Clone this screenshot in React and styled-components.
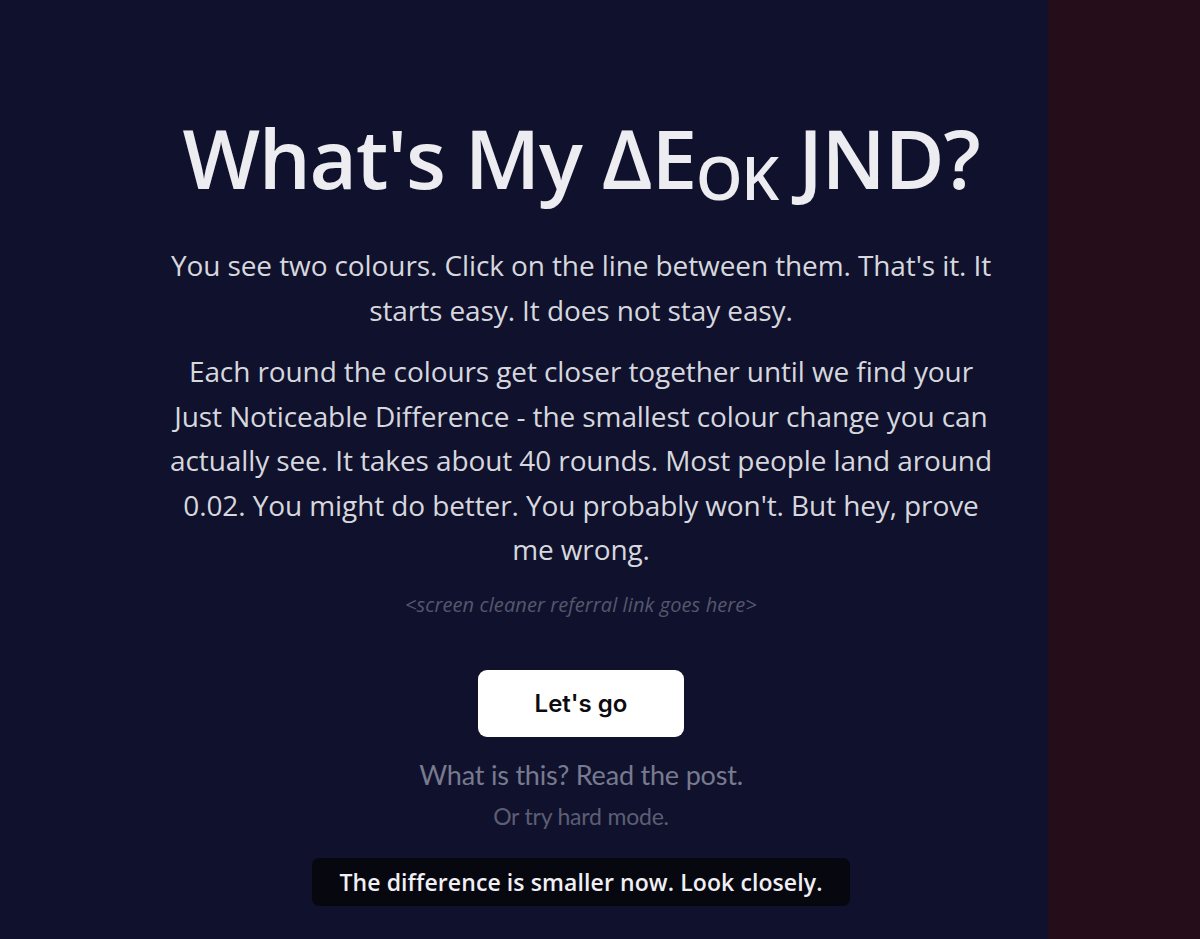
import React from 'react';
import styled, { createGlobalStyle } from 'styled-components';

const GlobalStyle = createGlobalStyle`
  html, body {
    margin: 0;
    padding: 0;
    background: #250e1a;
  }
  body {
    font-family: "Open Sans", "Noto Sans", sans-serif;
    -webkit-font-smoothing: antialiased;
  }
`;

const Stage = styled.div`
  display: grid;
  grid-template-columns: 1048px 1fr;
  height: 939px;
  overflow: hidden;
`;

const Pane = styled.div`
  background: ${(p) => p.$tone};
`;

const LeftPane = styled(Pane)`
  display: flex;
  flex-direction: column;
  align-items: center;
  padding: 116px 0 0 114px;
  box-sizing: border-box;
`;

const Title = styled.h1`
  margin: 0;
  font-size: 82px;
  font-weight: 560;
  line-height: 1;
  color: #ececf1;
  letter-spacing: -1.2px;
  font-stretch: 92%;
  white-space: nowrap;
`;

const Sub = styled.sub`
  font-size: 0.72em;
  vertical-align: -0.19em;
  line-height: 0;
  letter-spacing: -1px;
`;

const Copy = styled.p`
  margin: ${(p) => (p.$first ? '45px' : '17px')} 0 0;
  max-width: 836px;
  text-align: center;
  font-size: 28px;
  line-height: 44.5px;
  color: #d7d7de;
  letter-spacing: -0.1px;
`;

const Referral = styled.div`
  margin-top: 20px;
  font-style: italic;
  font-size: 20px;
  line-height: 26px;
  color: #55576e;
  letter-spacing: 0.1px;
`;

const GoButton = styled.button`
  margin-top: 52px;
  width: 206px;
  height: 67px;
  border: 0;
  border-radius: 9px;
  background: #ffffff;
  color: #0c0c10;
  font-family: Inter, "Liberation Sans", sans-serif;
  font-size: 24px;
  font-weight: 600;
  cursor: pointer;
`;

const TextLink = styled.a`
  margin-top: ${(p) => p.$gap};
  font-family: Lato, "Open Sans", sans-serif;
  font-size: ${(p) => p.$size};
  line-height: 1.2;
  color: ${(p) => p.$color};
  text-decoration: none;
  letter-spacing: -0.2px;
`;

const Toast = styled.div`
  margin-top: 28px;
  width: 538px;
  height: 48px;
  box-sizing: border-box;
  display: flex;
  align-items: center;
  justify-content: center;
  background: #07070f;
  border-radius: 7px;
  color: #f0f0f4;
  font-size: 23px;
  font-weight: 600;
  font-stretch: 92%;
  letter-spacing: 0.1px;
`;

export default function App() {
  return (
    <>
      <GlobalStyle />
      <Stage>
        <LeftPane $tone="#10122d">
          <Title>
            What's My ΔE<Sub>OK</Sub> JND?
          </Title>
          <Copy $first>
            You see two colours. Click on the line between them. That's it. It starts easy. It does not stay easy.
          </Copy>
          <Copy>
            Each round the colours get closer together until we find your Just Noticeable Difference - the smallest
            colour change you can actually see. It takes about 40 rounds. Most people land around 0.02. You might do
            better. You probably won't. But hey, prove me wrong.
          </Copy>
          <Referral>&lt;screen cleaner referral link goes here&gt;</Referral>
          <GoButton>Let's go</GoButton>
          <TextLink href="#" $gap="22px" $size="27px" $color="#787a8f">
            What is this? Read the post.
          </TextLink>
          <TextLink href="#" $gap="12px" $size="23px" $color="#5c5e73">
            Or try hard mode.
          </TextLink>
          <Toast>The difference is smaller now. Look closely.</Toast>
        </LeftPane>
        <Pane $tone="#250e1a" />
      </Stage>
    </>
  );
}
